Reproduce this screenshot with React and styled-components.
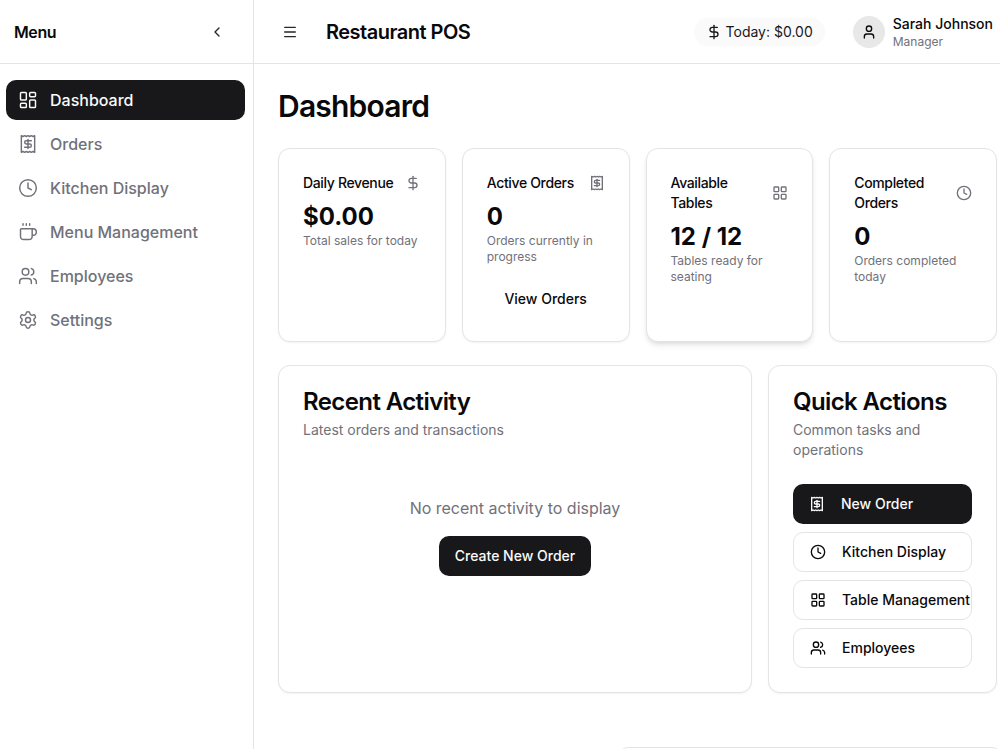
import React from "react";
import styled, { createGlobalStyle, css } from "styled-components";
import {
  ChevronLeft,
  Clock,
  Coffee,
  DollarSign,
  LayoutDashboard,
  LayoutGrid,
  Menu,
  Settings,
  User,
  Users,
} from "lucide-react";

const GlobalStyle = createGlobalStyle`
  *, *::before, *::after {
    box-sizing: border-box;
  }
  body {
    margin: 0;
    overflow: hidden;
    background: #fff;
    color: #09090b;
    font-family: Inter, "Liberation Sans", sans-serif;
    font-size: 16px;
    line-height: 24px;
  }
  h1, h2, h3, p {
    margin: 0;
  }
  button {
    font: inherit;
    color: inherit;
  }
  svg {
    flex-shrink: 0;
  }
`;

const Page = styled.div`
  display: flex;
  height: 100vh;
  overflow: hidden;
`;

const Sidebar = styled.aside`
  width: 254px;
  flex-shrink: 0;
  border-right: 1px solid #e4e4e7;
`;

const SidebarHeader = styled.div`
  height: 64px;
  display: flex;
  align-items: center;
  justify-content: space-between;
  padding: 0 16px 0 14px;
  border-bottom: 1px solid #e4e4e7;
`;

const SidebarTitle = styled.h2`
  font-size: 16px;
  font-weight: 600;
  letter-spacing: -0.4px;
`;

const IconButton = styled.button`
  width: 40px;
  height: 40px;
  display: flex;
  align-items: center;
  justify-content: center;
  padding: 0;
  border: 0;
  background: none;
  color: #27272a;
`;

const Nav = styled.nav`
  display: flex;
  flex-direction: column;
  gap: 4px;
  padding: 16px 8px 0 6px;
`;

const NavItem = styled.a`
  height: 40px;
  display: flex;
  align-items: center;
  gap: 12px;
  padding: 0 12px;
  border-radius: 10px;
  font-weight: 500;
  color: ${(props) => (props.$active ? "#fafafa" : "#71717a")};
  background: ${(props) => (props.$active ? "#18181b" : "transparent")};
`;

const Content = styled.div`
  width: 767px;
  flex-shrink: 0;
`;

const TopBar = styled.header`
  height: 64px;
  display: flex;
  align-items: center;
  justify-content: space-between;
  padding: 0 28px 0 16px;
  border-bottom: 1px solid #e4e4e7;
`;

const Brand = styled.div`
  display: flex;
  align-items: center;
  gap: 16px;
`;

const BrandName = styled.h1`
  font-size: 20px;
  line-height: 28px;
  font-weight: 600;
  letter-spacing: -0.5px;
`;

const TopRight = styled.div`
  display: flex;
  align-items: center;
  gap: 28px;
`;

const TodayPill = styled.div`
  height: 28px;
  display: flex;
  align-items: center;
  gap: 4px;
  padding: 0 12px;
  border-radius: 14px;
  background: #fafafa;
  font-size: 14px;
  line-height: 20px;
  color: #18181b;
`;

const Profile = styled.div`
  display: flex;
  align-items: center;
  gap: 8px;
`;

const Avatar = styled.div`
  width: 32px;
  height: 32px;
  display: flex;
  align-items: center;
  justify-content: center;
  border-radius: 50%;
  background: #e8e8e8;
`;

const ProfileName = styled.p`
  font-size: 14px;
  line-height: 20px;
  font-weight: 500;
`;

const ProfileRole = styled.p`
  font-size: 12px;
  line-height: 16px;
  color: #71717a;
`;

const Main = styled.main`
  display: flex;
  flex-direction: column;
  padding: 24px;
`;

const PageTitle = styled.h1`
  margin-bottom: 24px;
  font-size: 30px;
  line-height: 36px;
  font-weight: 600;
  letter-spacing: -0.78px;
`;

const StatGrid = styled.div`
  display: grid;
  grid-template-columns: repeat(4, 1fr);
  gap: 16px;
  margin-bottom: 23px;
`;

const Card = styled.section`
  min-width: 0;
  padding: 24px;
  border: 1px solid #e4e4e7;
  border-radius: 12px;
  background: #fff;
  box-shadow: ${(props) =>
    props.$raised
      ? "0 4px 6px -1px rgba(0, 0, 0, 0.1), 0 2px 4px -2px rgba(0, 0, 0, 0.1)"
      : "0 1px 2px rgba(0, 0, 0, 0.05)"};
`;

const StatHead = styled.div`
  display: flex;
  align-items: center;
  justify-content: space-between;
  padding-bottom: 8px;

  svg {
    color: #71717a;
  }
`;

const StatTitle = styled.h3`
  font-size: 14px;
  line-height: 20px;
  font-weight: 500;
  letter-spacing: -0.35px;
`;

const StatValue = styled.div`
  font-size: 24px;
  line-height: 32px;
  font-weight: 700;
`;

const StatNote = styled.p`
  font-size: 12px;
  line-height: 16px;
  color: #71717a;
`;

const GhostButton = styled.button`
  width: 100%;
  height: 36px;
  margin-top: 16px;
  padding: 0;
  border: 0;
  background: none;
  font-size: 14px;
  font-weight: 500;
`;

const PanelGrid = styled.div`
  display: grid;
  grid-template-columns: 474px 229px;
  gap: 16px;
`;

const PanelTitle = styled.h3`
  font-size: 24px;
  line-height: 24px;
  font-weight: 600;
  letter-spacing: -0.6px;
`;

const PanelNote = styled.p`
  margin-top: 6px;
  font-size: 14px;
  line-height: 20px;
  color: #71717a;
`;

const EmptyState = styled.div`
  display: flex;
  flex-direction: column;
  align-items: center;
  gap: 16px;
  padding-top: 56px;
  color: #71717a;
`;

const Button = styled.button`
  height: 40px;
  display: flex;
  align-items: center;
  gap: 16px;
  padding: 0 16px;
  border: 1px solid #e4e4e7;
  border-radius: 10px;
  background: #fff;
  font-size: 14px;
  line-height: 20px;
  font-weight: 500;
  white-space: nowrap;

  ${(props) =>
    props.$primary &&
    css`
      border: 0;
      background: #18181b;
      color: #fafafa;
    `}
`;

const Actions = styled.div`
  display: flex;
  flex-direction: column;
  gap: 8px;
  padding-top: 24px;
`;

// peeks in from the bottom right corner of the window
const Toast = styled.div`
  position: fixed;
  top: 747px;
  left: 618px;
  width: 384px;
  height: 60px;
  border: 1px solid #e4e4e7;
  border-radius: 10px;
  background: #fff;
`;

const Receipt = ({ size = 16, strokeWidth = 2 }) => (
  <svg
    width={size}
    height={size}
    viewBox="0 0 24 24"
    fill="none"
    stroke="currentColor"
    strokeWidth={strokeWidth}
    strokeLinecap="round"
    strokeLinejoin="round"
  >
    <path d="M4 2v20l2-1 2 1 2-1 2 1 2-1 2 1 2-1 2 1V2l-2 1-2-1-2 1-2-1-2 1-2-1-2 1Z" />
    <path d="M16 8h-6a2 2 0 1 0 0 4h4a2 2 0 1 1 0 4H8" />
    <path d="M12 17.5v-11" />
  </svg>
);

const navItems = [
  { label: "Dashboard", icon: LayoutDashboard, active: true },
  { label: "Orders", icon: Receipt },
  { label: "Kitchen Display", icon: Clock },
  { label: "Menu Management", icon: Coffee },
  { label: "Employees", icon: Users },
  { label: "Settings", icon: Settings },
];

const stats = [
  {
    title: "Daily Revenue",
    icon: DollarSign,
    value: "$0.00",
    note: "Total sales for today",
  },
  {
    title: "Active Orders",
    icon: Receipt,
    value: "0",
    note: "Orders currently in progress",
    action: "View Orders",
  },
  {
    title: "Available Tables",
    icon: LayoutGrid,
    value: "12 / 12",
    note: "Tables ready for seating",
    raised: true,
  },
  {
    title: "Completed Orders",
    icon: Clock,
    value: "0",
    note: "Orders completed today",
  },
];

const actions = [
  { label: "New Order", icon: Receipt, primary: true },
  { label: "Kitchen Display", icon: Clock },
  { label: "Table Management", icon: LayoutGrid },
  { label: "Employees", icon: Users },
];

const App = () => {
  return (
    <Page>
      <GlobalStyle />
      <Sidebar>
        <SidebarHeader>
          <SidebarTitle>Menu</SidebarTitle>
          <IconButton aria-label="Collapse menu">
            <ChevronLeft size={16} />
          </IconButton>
        </SidebarHeader>
        <Nav>
          {navItems.map(({ label, icon: Icon, active }) => (
            <NavItem key={label} $active={active}>
              <Icon size={20} strokeWidth={1.75} />
              {label}
            </NavItem>
          ))}
        </Nav>
      </Sidebar>
      <Content>
        <TopBar>
          <Brand>
            <IconButton aria-label="Toggle menu">
              <Menu size={16} />
            </IconButton>
            <BrandName>Restaurant POS</BrandName>
          </Brand>
          <TopRight>
            <TodayPill>
              <DollarSign size={16} />
              Today: $0.00
            </TodayPill>
            <Profile>
              <Avatar>
                <User size={16} />
              </Avatar>
              <div>
                <ProfileName>Sarah Johnson</ProfileName>
                <ProfileRole>Manager</ProfileRole>
              </div>
            </Profile>
          </TopRight>
        </TopBar>
        <Main>
          <PageTitle>Dashboard</PageTitle>
          <StatGrid>
            {stats.map(({ title, icon: Icon, value, note, action, raised }) => (
              <Card key={title} $raised={raised}>
                <StatHead>
                  <StatTitle>{title}</StatTitle>
                  <Icon size={16} />
                </StatHead>
                <StatValue>{value}</StatValue>
                <StatNote>{note}</StatNote>
                {action && <GhostButton>{action}</GhostButton>}
              </Card>
            ))}
          </StatGrid>
          <PanelGrid>
            <Card>
              <PanelTitle>Recent Activity</PanelTitle>
              <PanelNote>Latest orders and transactions</PanelNote>
              <EmptyState>
                <p>No recent activity to display</p>
                <Button $primary>Create New Order</Button>
              </EmptyState>
            </Card>
            <Card>
              <PanelTitle>Quick Actions</PanelTitle>
              <PanelNote>Common tasks and operations</PanelNote>
              <Actions>
                {actions.map(({ label, icon: Icon, primary }) => (
                  <Button key={label} $primary={primary}>
                    <Icon size={16} />
                    {label}
                  </Button>
                ))}
              </Actions>
            </Card>
          </PanelGrid>
        </Main>
      </Content>
      <Toast />
    </Page>
  );
};

export default App;
